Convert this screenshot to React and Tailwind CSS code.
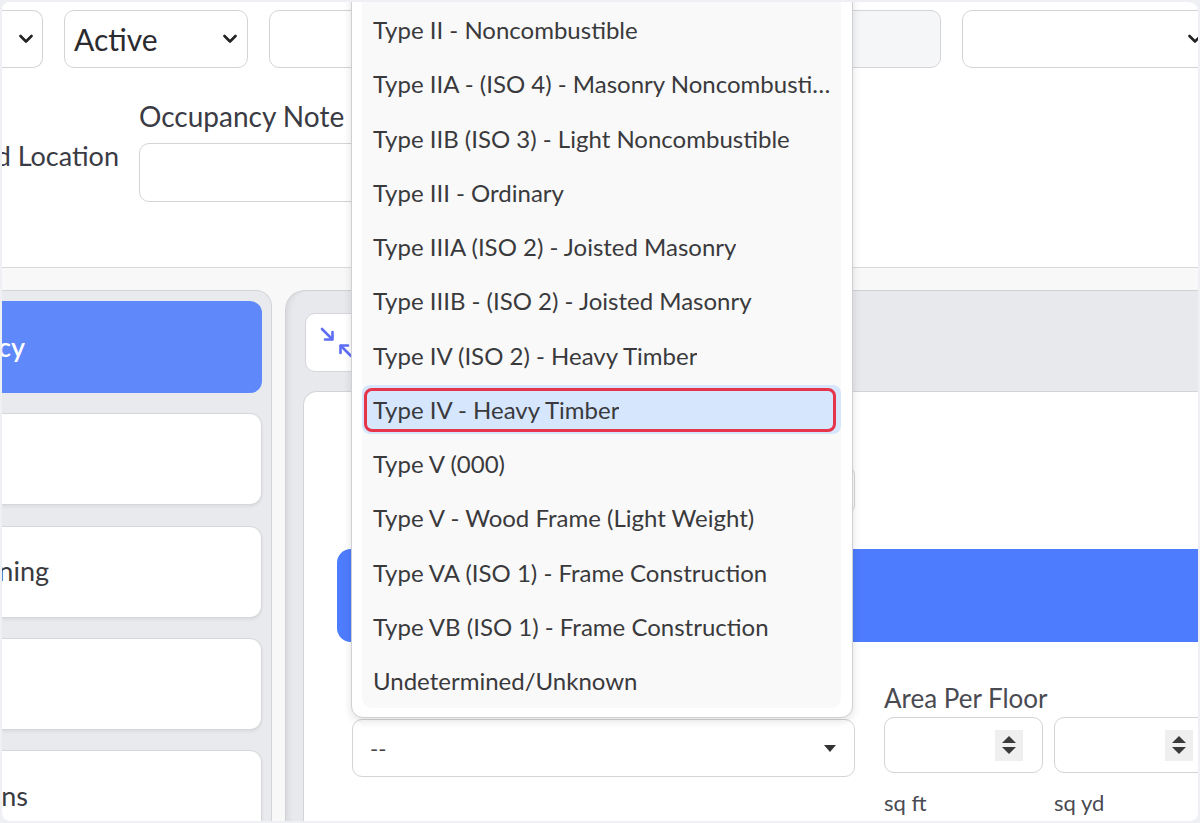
import React from "react";

const constructionTypes = [
  "Type II - Noncombustible",
  "Type IIA - (ISO 4) - Masonry Noncombustible",
  "Type IIB (ISO 3) - Light Noncombustible",
  "Type III - Ordinary",
  "Type IIIA (ISO 2) - Joisted Masonry",
  "Type IIIB - (ISO 2) - Joisted Masonry",
  "Type IV (ISO 2) - Heavy Timber",
  "Type IV - Heavy Timber",
  "Type V (000)",
  "Type V - Wood Frame (Light Weight)",
  "Type VA (ISO 1) - Frame Construction",
  "Type VB (ISO 1) - Frame Construction",
  "Undetermined/Unknown",
];

const selectedType = "Type IV - Heavy Timber";

const Chevron = ({ className = "" }) => (
  <svg width="14" height="10" viewBox="0 0 14 10" className={className}>
    <path d="M1.5 2l5.5 5.5L12.5 2" fill="none" stroke="#222" strokeWidth="2.6" strokeLinecap="round" strokeLinejoin="round" />
  </svg>
);

const Spinner = () => (
  <div className="w-[28px] h-[31px] bg-[#efefef] flex flex-col items-center justify-center gap-[4px]">
    <svg width="14" height="7" viewBox="0 0 14 7">
      <path d="M7 0L14 7H0z" fill="#3a3a3a" />
    </svg>
    <svg width="14" height="7" viewBox="0 0 14 7">
      <path d="M0 0h14L7 7z" fill="#3a3a3a" />
    </svg>
  </div>
);

// label that is cut off at the left edge of the screen
const ClippedText = ({ width, className = "", children }) => (
  <div className={`flex justify-end overflow-hidden whitespace-nowrap ${className}`} style={{ width }}>
    <span>{children}</span>
  </div>
);

const SideItem = ({ label, clip, active }) => (
  <div
    className={
      active
        ? "h-[92px] shrink-0 rounded-r-[12px] bg-[#5f89fb] flex items-center"
        : "h-[92px] shrink-0 rounded-r-[12px] bg-white border-y border-r border-[#d6d7da] shadow-[0_2px_3px_rgba(0,0,0,0.06)] flex items-center"
    }
  >
    {label && (
      <ClippedText
        width={clip}
        className={active ? "text-[27px] font-semibold text-white" : "text-[27px] text-[#3a3b40]"}
      >
        {label}
      </ClippedText>
    )}
  </div>
);

const CollapseIcon = () => (
  <svg width="34" height="32" viewBox="0 0 34 32" fill="none" stroke="#5d6df6" strokeWidth="2.6" strokeLinecap="round" strokeLinejoin="round">
    <line x1="2" y1="2" x2="12" y2="12" />
    <polyline points="5,12.5 12.5,12.5 12.5,5" />
    <line x1="31" y1="29" x2="21" y2="19" />
    <polyline points="28,18.5 20.5,18.5 20.5,26" />
  </svg>
);

export default function App() {
  return (
    <div className="relative w-[1200px] h-[823px] overflow-hidden bg-[#eef0f4] p-[2px] font-['Lato','Noto_Sans',sans-serif]">
      <div className="relative w-full h-full overflow-hidden rounded-[8px] bg-[#f8f8f9] flex flex-col">
        {/* top form card */}
        <div className="h-[266px] shrink-0 bg-white border-b border-[#d9d9dc] rounded-tr-[12px] pt-[8px]">
          <div className="flex gap-[21px] h-[58px]">
            <div className="w-[41px] shrink-0 border-y border-r border-[#d4d4d6] rounded-r-[10px] flex items-center justify-end pr-[9px]">
              <Chevron />
            </div>
            <div className="w-[184px] shrink-0 border border-[#d4d4d6] rounded-[10px] flex items-center justify-between pl-[9px] pr-[10px]">
              <span className="text-[30px] text-[#2b2b2f]">Active</span>
              <Chevron />
            </div>
            <div className="w-[325px] shrink-0 border border-[#d4d4d6] rounded-[10px]" />
            <div className="w-[326px] shrink-0 border border-[#d4d4d6] rounded-[10px] bg-[#f5f6f8]" />
            <div className="w-[260px] shrink-0 border border-[#d4d4d6] rounded-[10px] flex items-center justify-end pr-[19px]">
              <Chevron />
            </div>
          </div>
          <div className="flex gap-[20px] mt-[34px]">
            <div className="pt-[39px]">
              <ClippedText width="117px" className="text-[27px] leading-[29px] text-[#3a3b44]">
                Sprinkler Head Location
              </ClippedText>
            </div>
            <div className="flex flex-col">
              <label className="text-[28px] leading-[29px] text-[#3a3b44] whitespace-nowrap">Occupancy Note</label>
              <div className="mt-[12px] w-[456px] h-[59px] border border-[#d4d4d6] rounded-[10px]" />
            </div>
          </div>
        </div>

        {/* panels */}
        <div className="flex flex-1 mt-[22px] gap-[13px] min-h-0">
          <div className="w-[270px] shrink-0 bg-[#e9eaee] border-t border-r border-[#d3d4d8] rounded-tr-[16px] pt-[10px] pr-[9px] flex flex-col gap-[20.25px] overflow-hidden">
            <SideItem label="Occupancy" clip="23px" active />
            <SideItem />
            <SideItem label="Zoning" clip="47px" />
            <SideItem />
            <SideItem label="Inspections" clip="26px" />
          </div>

          <div className="flex-1 flex flex-col bg-[#e8e9ed] border-t border-l border-[#d1d2d6] rounded-tl-[20px] pl-[17px] shadow-[inset_6px_0_6px_-4px_rgba(0,0,0,0.08)]">
            <div className="h-[100px] shrink-0 pt-[22px]">
              <div className="ml-[2px] w-[66px] h-[59px] bg-white border border-[#d6d7da] rounded-[10px] flex items-center pl-[14px]">
                <CollapseIcon />
              </div>
            </div>
            <div className="flex-1 bg-white border-t border-l border-[#d3d4d8] rounded-tl-[14px] pl-[33px]">
              <div className="ml-[15px] mt-[73px] w-[503px] h-[50px] border border-[#d4d4d6] rounded-[10px]" />
              <div className="mt-[34px] h-[93px] bg-[#4e7cff] rounded-l-[14px]" />
              <div className="flex gap-[29px] mt-[43px]">
                <div className="ml-[15px] w-[503px] pt-[34px]">
                  <div className="h-[58px] border border-[#d4d4d6] rounded-[10px] flex items-center justify-between pl-[17px] pr-[18px]">
                    <span className="text-[22px] text-[#444]">--</span>
                    <svg width="12" height="7" viewBox="0 0 12 7">
                      <path d="M0 0h12L6 7z" fill="#333" />
                    </svg>
                  </div>
                </div>
                <div className="flex flex-col">
                  <span className="text-[26px] leading-[26px] text-[#4a4b52] whitespace-nowrap">Area Per Floor</span>
                  <div className="flex gap-[11px] mt-[6px]">
                    <div className="flex flex-col">
                      <div className="w-[159px] h-[56px] border border-[#d4d4d6] rounded-[10px] flex items-center justify-end pr-[19px]">
                        <Spinner />
                      </div>
                      <span className="mt-[18px] text-[22px] leading-[24px] text-[#4a4b52]">sq ft</span>
                    </div>
                    <div className="flex flex-col">
                      <div className="w-[159px] h-[56px] border border-[#d4d4d6] rounded-[10px] flex items-center justify-end pr-[19px]">
                        <Spinner />
                      </div>
                      <span className="mt-[18px] text-[22px] leading-[24px] text-[#4a4b52]">sq yd</span>
                    </div>
                  </div>
                </div>
              </div>
            </div>
          </div>
        </div>

        {/* open dropdown of construction types */}
        <div className="absolute left-[349px] top-[-10px] w-[502px] h-[726px] bg-white border border-[#cfd0d3] rounded-b-[12px] shadow-[0_3px_8px_rgba(0,0,0,0.12)] pl-[10px] pr-[11px] pb-[9px]">
          <div className="h-full bg-[#f9f9f9] rounded-b-[10px] pt-[12.5px] flex flex-col gap-[5.25px]">
            {constructionTypes.map((t) => (
              <div
                key={t}
                className={
                  t === selectedType
                    ? "relative h-[49px] shrink-0 flex items-center pl-[11px] pr-[8px] bg-[#d5e6fd] rounded-[8px]"
                    : "h-[49px] shrink-0 flex items-center pl-[11px] pr-[8px]"
                }
              >
                <span className="truncate text-[24px] text-[#3a3a3d]">{t}</span>
                {t === selectedType && (
                  <div className="absolute top-[3px] bottom-[2px] left-[2px] right-[5px] border-[3px] border-[#e6344a] rounded-[8px]" />
                )}
              </div>
            ))}
          </div>
        </div>
      </div>
    </div>
  );
}
